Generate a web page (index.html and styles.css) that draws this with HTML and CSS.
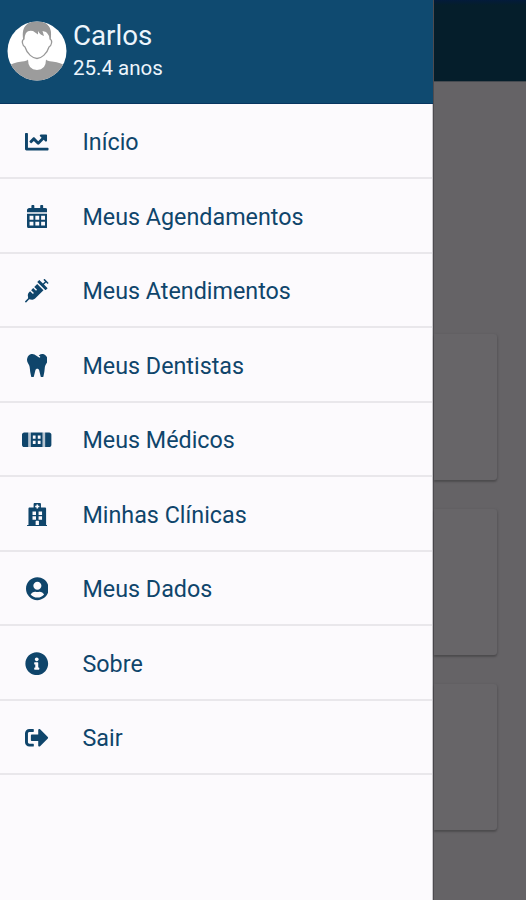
FILE: index.html
```html
<!DOCTYPE html>
<html lang="pt-BR">
<head>
<meta charset="utf-8">
<title>Menu</title>
<link rel="stylesheet" href="styles.css">
</head>
<body>
<div class="screen">
  <aside class="drawer">
    <header class="profile">
      <svg class="avatar" viewBox="0 0 60 60">
        <defs><clipPath id="round"><circle cx="30" cy="30" r="29.5"/></clipPath></defs>
        <circle cx="30" cy="30" r="29.5" fill="#fff"/>
        <g clip-path="url(#round)">
          <path d="M0 60V46Q5 41.500 15 40.500Q20 40 21 38.500Q21 49 30 49Q39 49 39 38.500Q40 40 45 40.500Q55 41.500 60 46V60Z" fill="#9c9c9c"/>
          <path d="M17 18C16 5 21 1 30 1S44 5 43 18C46 19 44.500 25 42 26C40 33 34 37.500 30 37.500S20 33 18 26C15.500 25 14 19 17 18Z" fill="#fff" stroke="#999" stroke-width="1.300"/>
          <path d="M16.500 20C14 6 19 1 30 1S46 6 43.500 20Q42.500 14 39 11L35.500 10L37 15Q33 14 31 10L31 13.500L26 10Q21 9 19 12Q17.500 15 16.500 20Z" fill="#999"/>
        </g>
      </svg>
      <div class="identity">
        <div class="name">Carlos</div>
        <div class="age">25.4 anos</div>
      </div>
    </header>
    <nav class="menu">
      <a class="item"><span class="icon"><svg viewBox="0 0 512 512"><path d="M496 384H64V80c0-8.840-7.160-16-16-16H16C7.160 64 0 71.160 0 80v336c0 17.670 14.330 32 32 32h464c8.840 0 16-7.160 16-16v-32c0-8.840-7.160-16-16-16zM464 96H345.940c-21.380 0-32.090 25.850-16.970 40.970l32.400 32.400L288 242.750l-73.370-73.370c-12.500-12.500-32.760-12.500-45.250 0l-68.690 68.690c-6.250 6.250-6.250 16.380 0 22.630l22.620 22.620c6.250 6.250 16.380 6.250 22.630 0L192 237.250l73.370 73.370c12.500 12.500 32.760 12.500 45.250 0l96-96 32.400 32.400c15.120 15.120 40.970 4.410 40.970-16.970V112c.01-8.840-7.150-16-15.990-16z"/></svg></span><span class="label">Início</span></a>
      <a class="item"><span class="icon"><svg viewBox="0 0 448 512"><path fill-rule="evenodd" d="M400 64h-48V16c0-8.800-7.200-16-16-16h-32c-8.800 0-16 7.200-16 16v48H160V16c0-8.800-7.200-16-16-16h-32c-8.800 0-16 7.200-16 16v48H48C21.500 64 0 85.500 0 112v48h448v-48c0-26.500-21.500-48-48-48zM0 192v272c0 26.500 21.500 48 48 48h352c26.500 0 48-21.500 48-48V192zM56 236h84v84H56zM182 236h84v84h-84zM308 236h84v84h-84zM56 364h84v84H56zM182 364h84v84h-84zM308 364h84v84h-84z"/></svg></span><span class="label">Meus Agendamentos</span></a>
      <a class="item"><span class="icon"><svg viewBox="0 0 512 512"><path d="M201.500 174.800l55.700 55.800c3.100 3.100 3.100 8.200 0 11.300l-11.300 11.300c-3.100 3.100-8.200 3.100-11.300 0l-55.700-55.800-45.300 45.300 55.800 55.800c3.100 3.100 3.100 8.200 0 11.300l-11.300 11.300c-3.100 3.100-8.200 3.100-11.300 0L111 265.200l-26.400 26.400c-17.300 17.300-25.600 41.100-23 65.400l7.100 63.600L2.300 487c-3.100 3.100-3.100 8.200 0 11.300l11.300 11.300c3.100 3.100 8.200 3.100 11.300 0l66.300-66.300 63.600 7.100c23.900 2.600 47.900-5.400 65.400-23l181.900-181.900-135.700-135.700-64.900 65zm308.200-93.300L430.500 2.300c-3.100-3.100-8.200-3.100-11.300 0l-11.300 11.300c-3.100 3.100-3.100 8.200 0 11.300l28.300 28.300-45.300 45.300-56.600-56.600-17-17c-3.100-3.100-8.200-3.100-11.300 0l-33.900 33.900c-3.100 3.100-3.100 8.200 0 11.300l17 17L424.800 223l17 17c3.100 3.100 8.200 3.100 11.300 0l33.900-34c3.100-3.100 3.100-8.200 0-11.300l-73.500-73.500 45.300-45.300 28.300 28.300c3.100 3.100 8.200 3.100 11.300 0l11.300-11.300c3.100-3.200 3.100-8.200 0-11.400z"/></svg></span><span class="label">Meus Atendimentos</span></a>
      <a class="item"><span class="icon"><svg viewBox="0 0 448 512"><path d="M443.980 96.250c-11.010-45.220-47.110-82.060-92.010-93.720-32.190-8.360-63 5.100-89.140 24.330-3.250 2.390-6.960 3.730-10.500 5.480l28.320 18.210c7.420 4.770 9.580 14.670 4.800 22.110-4.460 6.950-14.270 9.860-22.110 4.800L162.830 12.840c-20.700-10.850-43.380-16.400-66.810-10.310-44.900 11.670-81 48.500-92.010 93.720-10.130 41.620-.42 80.810 21.500 110.430 23.360 31.570 32.680 68.660 36.290 107.350 4.400 47.160 10.330 94.160 20.940 140.320l7.800 33.950c3.190 13.870 15.490 23.700 29.670 23.700 13.970 0 26.150-9.550 29.540-23.160l34.470-138.420c4.560-18.320 20.960-31.160 39.760-31.160s35.200 12.850 39.760 31.160l34.470 138.420c3.390 13.610 15.570 23.160 29.540 23.160 14.180 0 26.480-9.830 29.670-23.700l7.800-33.950c10.610-46.150 16.530-93.160 20.940-140.320 3.610-38.700 12.930-75.780 36.290-107.350 21.950-29.610 31.660-68.800 21.530-110.430z"/></svg></span><span class="label">Meus Dentistas</span></a>
      <a class="item"><span class="icon"><svg viewBox="0 0 640 512"><path fill-rule="evenodd" d="M48 96h88v320H48c-26.500 0-48-21.500-48-48V144c0-26.500 21.500-48 48-48zM504 96h88c26.500 0 48 21.500 48 48v224c0 26.500-21.500 48-48 48h-88zM192 96h256v320H192zM236 166v66h60v-66zM344 166v66h60v-66zM236 280v66h60v-66zM344 280v66h60v-66z"/><path opacity=".3" d="M136 96h56v320h-56zM448 96h56v320h-56z"/></svg></span><span class="label">Meus Médicos</span></a>
      <a class="item"><span class="icon"><svg viewBox="0 0 448 512"><path fill-rule="evenodd" d="M448 492v20H0v-20c0-6.600 5.400-12 12-12h20V120c0-13.300 10.700-24 24-24h88V24c0-13.300 10.700-24 24-24h112c13.300 0 24 10.700 24 24v72h88c13.300 0 24 10.700 24 24v360h20c6.600 0 12 5.400 12 12zM120 184v76h76v-76zM252 184v76h76v-76zM120 288v76h76v-76zM252 288v76h76v-76zM188 396v84h72v-84c0-6.600-5.400-12-12-12h-48c-6.600 0-12 5.400-12 12zM178 62v32h28v28h36V94h28V62h-28V34h-36v28z"/></svg></span><span class="label">Minhas Clínicas</span></a>
      <a class="item"><span class="icon"><svg viewBox="0 0 496 512"><path d="M248 8C111 8 0 119 0 256s111 248 248 248 248-111 248-248S385 8 248 8zm0 96c48.600 0 88 39.400 88 88s-39.400 88-88 88-88-39.400-88-88 39.400-88 88-88zm0 344c-58.700 0-111.300-26.600-146.500-68.200 18.800-35.400 55.600-59.800 98.500-59.800 2.400 0 4.800.4 7.100 1.100 13 4.200 26.600 6.900 40.900 6.900 14.300 0 28-2.700 40.900-6.900 2.300-.7 4.700-1.100 7.100-1.100 42.900 0 79.700 24.400 98.500 59.800C359.300 421.400 306.700 448 248 448z"/></svg></span><span class="label">Meus Dados</span></a>
      <a class="item"><span class="icon"><svg viewBox="0 0 512 512"><path d="M256 8C119.043 8 8 119.083 8 256c0 136.997 111.043 248 248 248s248-111.003 248-248C504 119.083 392.957 8 256 8zm0 110c23.196 0 42 18.804 42 42s-18.804 42-42 42-42-18.804-42-42 18.804-42 42-42zm56 254c0 6.627-5.373 12-12 12h-88c-6.627 0-12-5.373-12-12v-24c0-6.627 5.373-12 12-12h12v-64h-12c-6.627 0-12-5.373-12-12v-24c0-6.627 5.373-12 12-12h64c6.627 0 12 5.373 12 12v100h12c6.627 0 12 5.373 12 12v24z"/></svg></span><span class="label">Sobre</span></a>
      <a class="item"><span class="icon"><svg viewBox="0 0 512 512"><path d="M497 273L329 441c-15 15-41 4.500-41-17v-96H152c-13.300 0-24-10.700-24-24v-96c0-13.300 10.700-24 24-24h136V88c0-21.400 25.900-32 41-17l168 168c9.300 9.400 9.300 24.600 0 34zM192 436v-40c0-6.600-5.400-12-12-12H96c-17.700 0-32-14.300-32-32V160c0-17.700 14.300-32 32-32h84c6.600 0 12-5.400 12-12V76c0-6.600-5.400-12-12-12H96c-53 0-96 43-96 96v192c0 53 43 96 96 96h84c6.600 0 12-5.400 12-12z"/></svg></span><span class="label">Sair</span></a>
    </nav>
  </aside>
  <main class="page">
    <div class="toolbar"></div>
    <div class="cards">
      <div class="card"></div>
      <div class="card"></div>
      <div class="card"></div>
    </div>
  </main>
</div>
</body>
</html>
```
FILE: styles.css
```css
* { box-sizing: border-box; }
body { margin: 0; font-family: Roboto, sans-serif; }
.screen { display: flex; width: 526px; height: 900px; overflow: hidden; background: #656366; }
.drawer { flex: none; width: 433px; background: #fcfafd; border-right: 1px solid #c9c7cb; }
.profile {
  display: flex;
  gap: 6px;
  width: 433px;
  height: 104px;
  padding: 21px 0 0 7px;
  background: #0f4a70;
  border-bottom: 1px solid #083660;
  color: #edf5fc;
}
.avatar { width: 60px; height: 60px; }
.name { height: 29px; font-size: 27.7px; line-height: 29px; }
.age { margin-top: 6px; font-size: 20.5px; line-height: 24px; }
.menu { padding-top: 0.5px; }
.item {
  display: flex;
  align-items: center;
  height: 74.5px;
  padding-top: 2px;
  border-bottom: 2px solid #e9e7eb;
  color: #0f456b;
}
.icon { display: flex; justify-content: center; width: 74px; }
.icon svg { height: 23.5px; fill: currentColor; }
.label { padding: 1px 0 0 8.5px; font-size: 23.3px; line-height: 30px; }
.page { flex: 1; border-left: 1px solid #4d4b4f; }
.toolbar { height: 82px; background: linear-gradient(#031b3b, #051e2b 5px); border-bottom: 1px solid #454a50; }
.cards { display: flex; flex-direction: column; gap: 29px; padding: 252px 29px 0 0; }
.card {
  height: 146px;
  background: #676568;
  border-radius: 0 3px 3px 0;
  box-shadow: 0 2px 2px rgba(0, 0, 0, .22), 1px 0 3px rgba(0, 0, 0, .08);
}
```
